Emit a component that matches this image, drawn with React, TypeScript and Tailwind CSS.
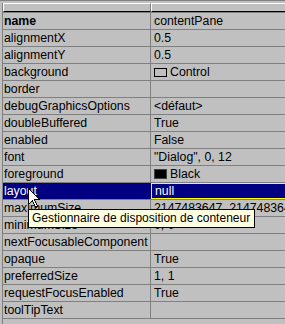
import type { ReactNode } from 'react';

interface Prop {
  readonly name: string;
  readonly value?: ReactNode;
  readonly bold?: boolean;
  readonly selected?: boolean;
}

function Swatch({ filled }: { readonly filled?: boolean }) {
  return (
    <span
      className={
        filled
          ? 'inline-block w-[13px] h-[10px] bg-black border border-[#404040] mr-[3px]'
          : 'inline-block w-[13px] h-[9px] border border-black mr-[3px]'
      }
    />
  );
}

const PROPS: readonly Prop[] = [
  { name: 'name', value: 'contentPane', bold: true },
  { name: 'alignmentX', value: '0.5' },
  { name: 'alignmentY', value: '0.5' },
  {
    name: 'background',
    value: (
      <span className="flex items-center">
        <Swatch />
        Control
      </span>
    ),
  },
  { name: 'border' },
  { name: 'debugGraphicsOptions', value: '<défaut>' },
  { name: 'doubleBuffered', value: 'True' },
  { name: 'enabled', value: 'False' },
  { name: 'font', value: '"Dialog", 0, 12' },
  {
    name: 'foreground',
    value: (
      <span className="flex items-center">
        <Swatch filled />
        Black
      </span>
    ),
  },
  { name: 'layout', value: 'null', selected: true },
  { name: 'maximumSize', value: '2147483647, 2147483647' },
  { name: 'minimumSize', value: '0, 0' },
  { name: 'nextFocusableComponent' },
  { name: 'opaque', value: 'True' },
  { name: 'preferredSize', value: '1, 1' },
  { name: 'requestFocusEnabled', value: 'True' },
  { name: 'toolTipText' },
];

function PropRow({ prop }: { readonly prop: Prop }) {
  const sel = prop.selected === true;
  return (
    <div className="flex h-[17px] border-t border-[#808080]">
      <div
        className={
          sel
            ? 'w-[148px] shrink-0 border-r border-[#000080] bg-[#000080] text-white pl-[1px] leading-[16px] whitespace-nowrap overflow-hidden'
            : 'w-[148px] shrink-0 border-r border-[#808080] pl-[1px] leading-[16px] whitespace-nowrap overflow-hidden'
        }
      >
        <span className={prop.bold ? 'font-bold' : ''}>{prop.name}</span>
      </div>
      <div
        className={
          sel
            ? 'flex-1 bg-[#000080] text-white border border-[#ffff00] pl-[3px] leading-[14px] whitespace-nowrap'
            : 'flex-1 pl-[3px] leading-[16px] whitespace-nowrap'
        }
      >
        {prop.value}
      </div>
    </div>
  );
}

function Cursor() {
  return (
    <svg className="absolute left-[28px] top-[187px]" width="13" height="21" viewBox="0 0 13 21">
      <path
        d="M0.5 0.5 L0.5 16.5 L4.5 12.5 L7.5 19.5 L9.5 18.5 L6.5 11.5 L11.5 11.5 Z"
        fill="#fff"
        stroke="#000"
        strokeWidth="1"
        shapeRendering="crispEdges"
      />
    </svg>
  );
}

export default function App() {
  return (
    <div className="relative w-[285px] h-[324px] overflow-hidden bg-[#c0c0c0] border-t border-[#808080] pt-[2px] pl-[2px] text-black text-[12.3px] font-['Liberation_Sans',Arial,sans-serif]">
      <div className="w-[320px] h-full border-l border-[#808080]">
        <div className="flex h-[9px]">
          <div className="w-[148px] shrink-0 border-t border-l border-white border-r-[#808080] border-r border-b border-b-black" />
          <div className="flex-1 border-t border-l border-white border-b border-b-black" />
        </div>
        {PROPS.map((p) => (
          <PropRow key={p.name} prop={p} />
        ))}
        <div className="h-[17px] border-t border-[#808080]" />
      </div>
      <div className="absolute left-[28px] top-[208px] h-[19px] border border-black bg-[#ffffe1] pl-[3px] pr-[4px] text-[12px] leading-[17px] whitespace-nowrap">
        Gestionnaire de disposition de conteneur
      </div>
      <Cursor />
    </div>
  );
}
